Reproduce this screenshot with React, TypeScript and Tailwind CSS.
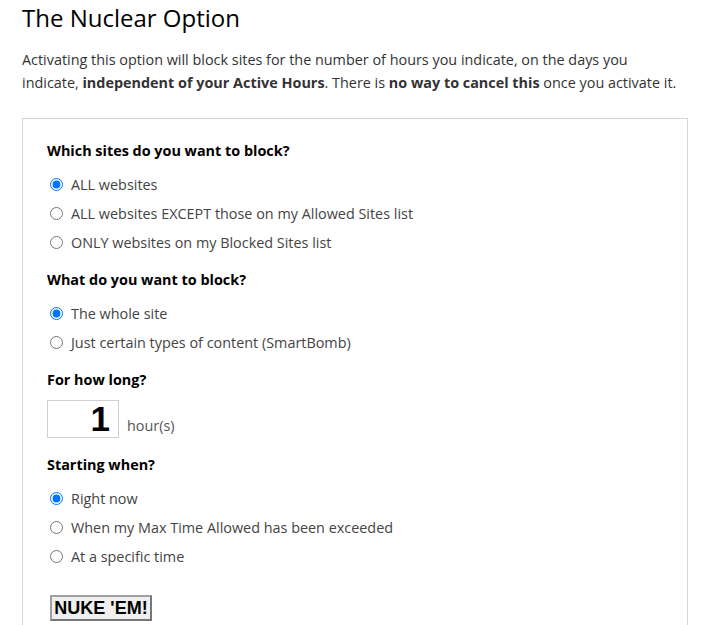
import { useState } from "react";

const font = { fontFamily: '"Open Sans", "Liberation Sans", sans-serif' };

type Opt = { value: string; label: string };

const RadioGroup = ({
  name,
  options,
  value,
  onChange,
}: {
  name: string;
  options: Opt[];
  value: string;
  onChange: (v: string) => void;
}) => (
  <div className="mt-[9px]">
    {options.map((o) => (
      <label key={o.value} className="flex h-[29px] items-center text-[14.4px] text-[#444]">
        <input
          type="radio"
          name={name}
          checked={value === o.value}
          onChange={() => onChange(o.value)}
          className="ml-[3px] mr-[8px] h-[13px] w-[13px]"
        />
        {o.label}
      </label>
    ))}
  </div>
);

export default function App() {
  const [sites, setSites] = useState("all");
  const [what, setWhat] = useState("whole");
  const [hours, setHours] = useState("1");
  const [start, setStart] = useState("now");

  return (
    <div className="min-h-screen bg-white pl-[22px] pr-[24px]" style={font}>
      <h1 className="pt-[2px] text-[24px] leading-8 text-black">The Nuclear Option</h1>
      <p className="mt-[14px] w-[665px] text-[14.4px] leading-[23px] text-[#333]">
        Activating this option will block sites for the number of hours you indicate, on the days you
        indicate, <b>independent of your Active Hours</b>. There is <b>no way to cancel this</b> once you
        activate it.
      </p>

      <div className="mt-[24px] w-[666px] border border-[#d4d4d4] px-[24px] pt-[22px] pb-[10px]">
        <h3 className="text-[14.4px] font-bold leading-5 text-black">Which sites do you want to block?</h3>
        <RadioGroup
          name="sites"
          value={sites}
          onChange={setSites}
          options={[
            { value: "all", label: "ALL websites" },
            { value: "except", label: "ALL websites EXCEPT those on my Allowed Sites list" },
            { value: "only", label: "ONLY websites on my Blocked Sites list" },
          ]}
        />

        <h3 className="mt-[13px] text-[14.4px] font-bold leading-5 text-black">What do you want to block?</h3>
        <RadioGroup
          name="what"
          value={what}
          onChange={setWhat}
          options={[
            { value: "whole", label: "The whole site" },
            { value: "smart", label: "Just certain types of content (SmartBomb)" },
          ]}
        />

        <h3 className="mt-[13px] text-[14.4px] font-bold leading-5 text-black">For how long?</h3>
        <div className="mt-[10px] flex items-end">
          <input
            value={hours}
            onChange={(e) => setHours(e.target.value)}
            className="h-[38px] w-[72px] border border-[#d0d0d0] pr-[8px] text-right text-[35px] font-bold leading-none text-black outline-none"
            style={{ fontFamily: '"Liberation Sans", Arial, sans-serif' }}
          />
          <span className="mb-[1px] ml-[8px] text-[14.4px] text-[#555]">hour(s)</span>
        </div>

        <h3 className="mt-[17px] text-[14.4px] font-bold leading-5 text-black">Starting when?</h3>
        <RadioGroup
          name="start"
          value={start}
          onChange={setStart}
          options={[
            { value: "now", label: "Right now" },
            { value: "max", label: "When my Max Time Allowed has been exceeded" },
            { value: "specific", label: "At a specific time" },
          ]}
        />

        <button
          className="ml-[3px] mt-[24px] h-[26px] w-[102px] border-2 border-[#767676] border-t-[#a0a0a0] border-l-[#a0a0a0] bg-[#efefef] text-[18px] font-bold leading-none text-black"
          style={{ fontFamily: '"Liberation Sans", Arial, sans-serif' }}
        >
          NUKE 'EM!
        </button>
      </div>
    </div>
  );
}
